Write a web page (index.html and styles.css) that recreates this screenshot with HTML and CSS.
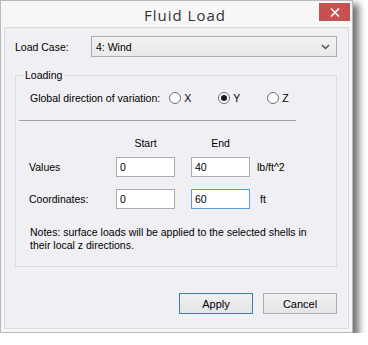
FILE: index.html
```html
<!DOCTYPE html>
<html lang="en">
<head>
<meta charset="UTF-8" />
<title>Fluid Load</title>
<link rel="stylesheet" href="styles.css">
</head>
<body>

<div class="window">
  <div class="titlebar">
    <div class="title">Fluid Load</div>
    <button class="close-btn" aria-label="Close">
      <svg width="10" height="9" viewBox="0 0 10 9"><path d="M1 0.5 L9 8.5 M9 0.5 L1 8.5" stroke="#fff" stroke-width="1.6" fill="none"/></svg>
    </button>
  </div>

  <div class="client">
    <div class="case-row">
      <label class="case-label">Load Case:</label>
      <div class="select">
        <span>4: Wind</span>
        <svg width="9" height="6" viewBox="0 0 9 6"><path d="M1 1 L4.5 4.5 L8 1" stroke="#555" stroke-width="1.5" fill="none"/></svg>
      </div>
    </div>

    <fieldset class="group">
      <legend>Loading</legend>

      <div class="direction">
        <span class="dir-label">Global direction of variation:</span>
        <span class="radio"><span class="dot"></span>X</span>
        <span class="radio checked"><span class="dot"></span>Y</span>
        <span class="radio"><span class="dot"></span>Z</span>
      </div>

      <div class="separator"></div>

      <div class="grid">
        <span></span>
        <span class="head">Start</span>
        <span class="head">End</span>
        <span></span>

        <span class="row-label">Values</span>
        <input class="field" type="text" value="0">
        <input class="field" type="text" value="40">
        <span class="unit">lb/ft^2</span>

        <span class="row-label">Coordinates:</span>
        <input class="field" type="text" value="0">
        <input class="field focused" type="text" value="60">
        <span class="unit ft">ft</span>
      </div>

      <p class="notes">Notes: surface loads will be applied to the selected shells in<br>their local z directions.</p>
    </fieldset>

    <div class="buttons">
      <button class="btn default">Apply</button>
      <button class="btn">Cancel</button>
    </div>
  </div>
</div>

</body>
</html>
```

FILE: styles.css
```css
body {
  margin: 0;
  background: #fff;
  font-family: "Liberation Sans", Arial, sans-serif;
  font-size: 10.5px;
  color: #000;
}
.window {
  width: 351px;
  height: 331px;
  border: 1px solid #b9b9b9;
  background: #f7f7f7;
  box-shadow: 5px 5px 7px 1px rgba(0,0,0,0.55);
  display: flex;
  flex-direction: column;
}
.titlebar {
  height: 26px;
  display: flex;
  align-items: flex-start;
}
.title {
  flex: 1;
  text-align: center;
  padding-left: 50px;
  padding-top: 4px;
  font-family: "Open Sans", sans-serif;
  font-size: 15px;
  letter-spacing: 1px;
  color: #333;
}
.close-btn {
  width: 31px;
  height: 18px;
  margin: 2px 2px 0 0;
  border: none;
  background: #c75050;
  display: flex;
  align-items: center;
  justify-content: center;
  padding: 0;
}
.client {
  flex: 1;
  margin: 0 3px 3px 3px;
  border: 1px solid #dadada;
  background: #f0eff3;
  padding: 8px 11px 0 10px;
  display: flex;
  flex-direction: column;
}
.case-row {
  display: flex;
  align-items: center;
}
.case-label {
  width: 76px;
}
.select {
  height: 19px;
  border: 1px solid #acacac;
  background: linear-gradient(#f2f2f2, #e9e9e9);
  display: flex;
  align-items: center;
  justify-content: space-between;
  padding: 0 6px 0 4px;
  width: 234px;
}
.group {
  margin: 12px 0 0 0;
  padding: 6px 12px 0 14px;
  border: 1px solid #dcdcdc;
  height: 198px;
  box-sizing: border-box;
}
.group legend {
  padding: 0 2px;
  margin-left: -7px;
}
.direction {
  display: flex;
  align-items: center;
  margin-top: 5px;
}
.dir-label {
  margin-right: 9px;
}
.radio {
  display: flex;
  align-items: center;
  width: 49px;
}
.radio .dot {
  width: 10px;
  height: 10px;
  border: 1px solid #6f6f6f;
  border-radius: 50%;
  background: #fff;
  margin-right: 3px;
  display: flex;
  align-items: center;
  justify-content: center;
}
.radio.checked .dot::after {
  content: "";
  width: 6px;
  height: 6px;
  border-radius: 50%;
  background: #1a1a1a;
}
.separator {
  height: 1px;
  background: #a0a0a0;
  width: 277px;
  margin: 16px 0 0 -11px;
}
.grid {
  display: grid;
  grid-template-columns: 71px 59px 59px auto;
  column-gap: 16px;
  row-gap: 12px;
  align-items: center;
  margin-top: 16px;
  margin-left: -1px;
}
.head {
  text-align: center;
  margin-bottom: -4px;
}
.field {
  width: 59px;
  height: 20px;
  box-sizing: border-box;
  border: 1px solid #abadb3;
  background: #fff;
  font: inherit;
  padding: 0 3px;
  margin: 0;
}
.field.focused {
  border-color: #569de5;
}
.unit {
  margin-left: -9px;
}
.unit.ft {
  margin-left: -6px;
}
.notes {
  margin: 17px 0 0 0;
  line-height: 13px;
}
.buttons {
  display: flex;
  justify-content: flex-end;
  gap: 10px;
  margin-top: 26px;
}
.btn {
  width: 74px;
  height: 21px;
  border: 1px solid #acacac;
  background: linear-gradient(#f0f0f0, #e5e5e5);
  font: inherit;
  font-size: 11px;
  padding: 0;
}
.btn.default {
  border-color: #3c7fb1;
}
```
